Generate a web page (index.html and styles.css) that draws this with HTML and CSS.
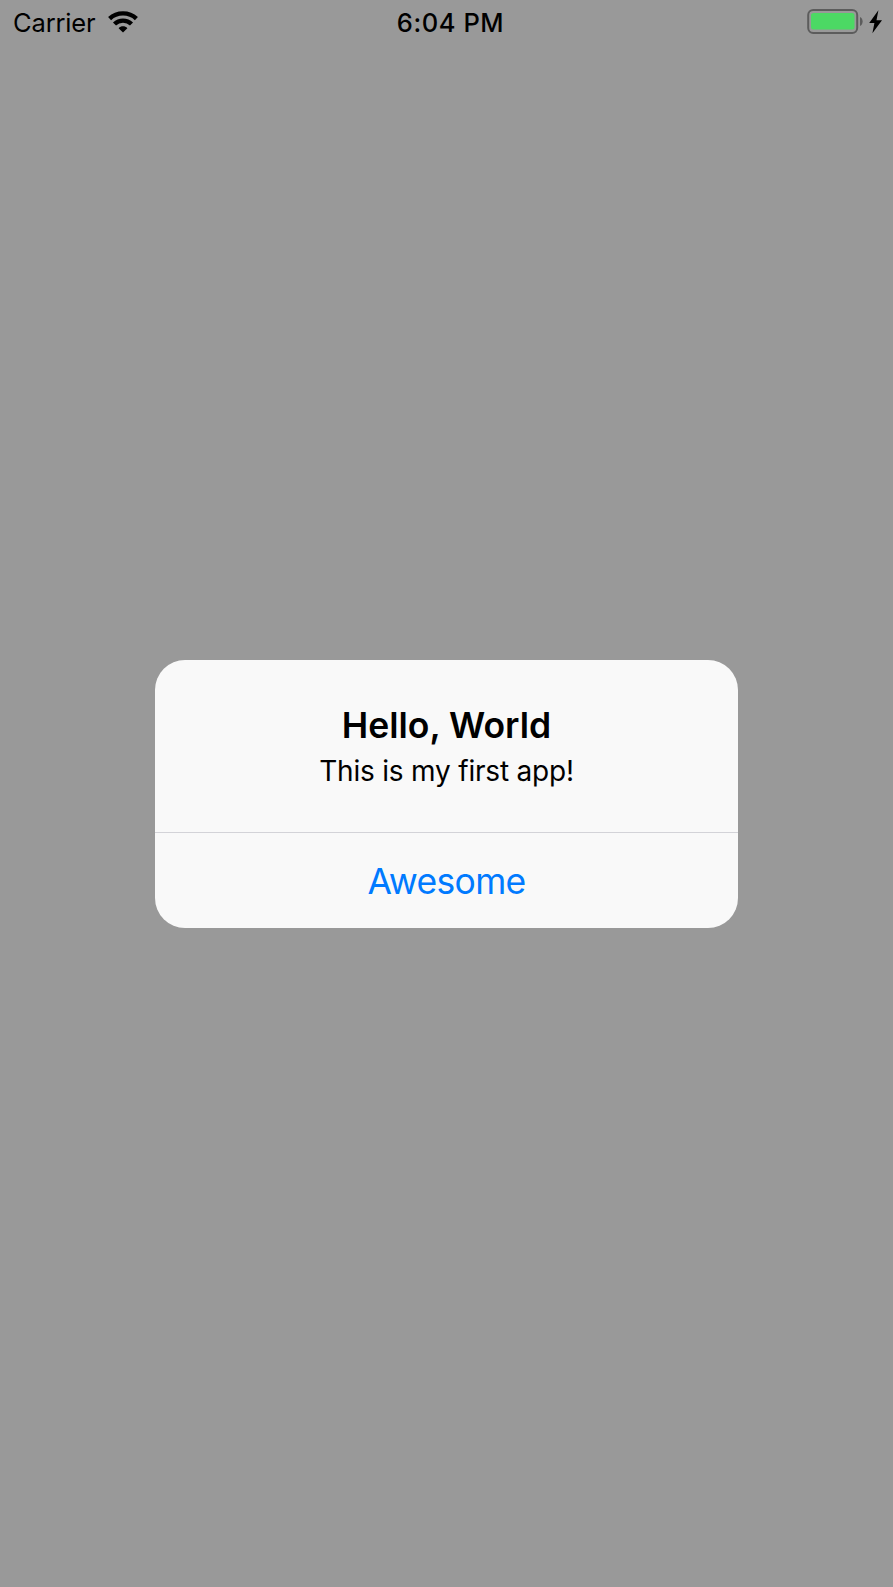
FILE: index.html
```html
<!DOCTYPE html>
<html lang="en">
<head>
<meta charset="utf-8">
<title>Hello, World</title>
<link rel="stylesheet" href="styles.css">
</head>
<body>
<div class="screen">
  <header class="status">
    <div class="status-left">
      <span class="carrier">Carrier</span>
      <svg class="wifi" width="30" height="22" viewBox="0 0 30 22" aria-label="Wi-Fi">
        <g fill="none" stroke="#000" stroke-width="4.4">
          <path d="M1.6 7.6C9 .6 21 .6 28.4 7.6"/>
          <path d="M6.5 13C11.2 8.5 18.8 8.5 23.5 13"/>
        </g>
        <path d="M10.6 17.2C13 14.6 17 14.6 19.4 17.2L15 21.6Z"/>
      </svg>
    </div>
    <time class="clock">6:04 PM</time>
    <div class="status-right">
      <svg class="battery" width="56" height="26" viewBox="0 0 56 26" aria-label="Battery">
        <rect x="1.2" y="1" width="49" height="23" rx="5" fill="none" stroke="#5c5c5c" stroke-width="2"/>
        <rect x="4" y="4" width="43.5" height="16.5" rx="2.5" fill="#4cd964"/>
        <path d="M53 8C56.5 9.6 56.5 15.4 53 17Z" fill="#5c5c5c"/>
      </svg>
      <svg class="bolt" width="14" height="24" viewBox="0 0 14 24" aria-label="Charging">
        <path d="M9.4 .2L.2 13H5.4L3.4 23.2L13 10.2H7.5Z"/>
      </svg>
    </div>
  </header>
  <main class="backdrop">
    <section class="alert" role="alertdialog">
      <div class="alert-body">
        <h1 class="alert-title">Hello, World</h1>
        <p class="alert-message">This is my first app!</p>
      </div>
      <button class="alert-action">Awesome</button>
    </section>
  </main>
</div>
</body>
</html>
```
FILE: styles.css
```css
body {
  margin: 0;
  background: #999;
  color: #000;
  font-family: Inter, "Liberation Sans", sans-serif;
}
.screen {
  display: flex;
  flex-direction: column;
  height: 1587px;
}
.status {
  display: grid;
  grid-template-columns: 1fr auto 1fr;
  align-items: center;
  height: 45px;
  padding: 0 10px 0 13px;
}
.status-left,
.status-right {
  display: flex;
  align-items: center;
}
.status-left {
  gap: 12px;
}
.status-right {
  justify-content: flex-end;
  gap: 6px;
}
.carrier {
  font-size: 25.5px;
  letter-spacing: -0.15px;
  line-height: 45px;
}
.clock {
  padding-left: 5px;
  font-size: 25.5px;
  font-weight: 550;
  letter-spacing: 0.55px;
  line-height: 45px;
}
.wifi {
  margin-bottom: 2px;
}
.battery,
.bolt {
  margin-bottom: 1px;
}
.backdrop {
  display: flex;
  flex: 1;
  align-items: center;
  justify-content: center;
  padding-bottom: 44px;
}
.alert {
  width: 583px;
  height: 268px;
  overflow: hidden;
  border-radius: 30px;
  background: #f9f9f9;
}
.alert-body {
  box-sizing: border-box;
  height: 172px;
  padding-top: 44px;
  text-align: center;
}
.alert-title {
  margin: 0;
  font-size: 35.5px;
  font-weight: 600;
  line-height: 44px;
}
.alert-message {
  margin: 0;
  padding-top: 4px;
  font-size: 28px;
  letter-spacing: -0.2px;
  line-height: 38px;
}
.alert-action {
  display: block;
  width: 100%;
  height: 96px;
  padding: 3px 0 0;
  border: 0;
  border-top: 1px solid #d3d3d8;
  background: none;
  color: #007aff;
  font: 400 35.5px/44px Inter, "Liberation Sans", sans-serif;
  letter-spacing: -0.7px;
}
```
